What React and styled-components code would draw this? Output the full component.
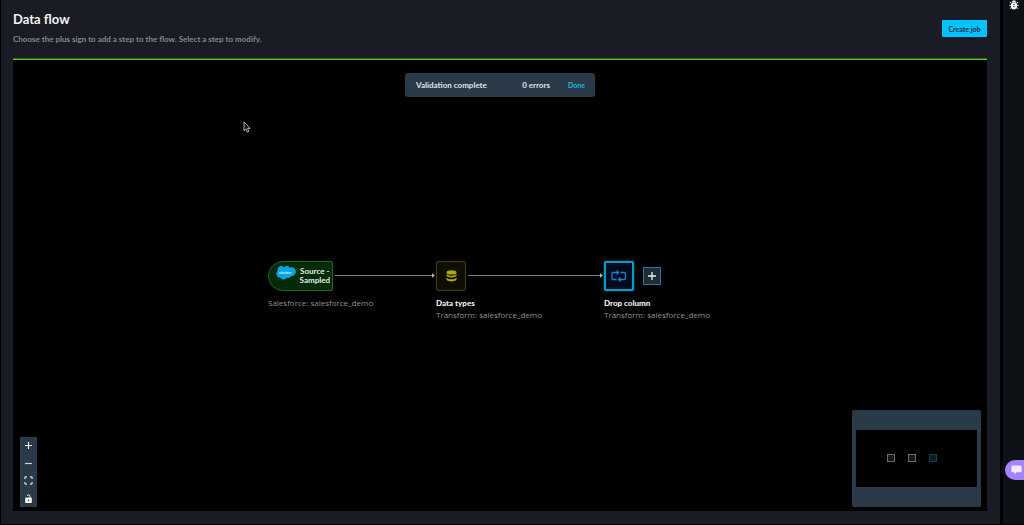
import styled, { createGlobalStyle } from "styled-components";

const GlobalStyle = createGlobalStyle`
  * {
    box-sizing: border-box;
  }

  body {
    margin: 0;
    background-color: #000;
    font-family: Lato, "Noto Sans", sans-serif;
    overflow: hidden;
  }

  button {
    font-family: inherit;
    padding: 0;
    cursor: pointer;
  }
`;

const Page = styled.div`
  display: flex;
  gap: 3px;
  height: 100vh;
  padding: 0 0 1px 1px;
`;

const Main = styled.main`
  flex: 1;
  min-width: 0;
  display: flex;
  flex-direction: column;
  padding: 0 13px 13px 12px;
  background-color: #1a1c25;
`;

const Header = styled.header`
  display: flex;
  justify-content: space-between;
  align-items: flex-start;
  height: 59px;
  padding-top: 11px;
  border-bottom: 1px solid #2f6414;
`;

const Title = styled.h1`
  margin: 0;
  font-size: 13px;
  line-height: 17px;
  font-weight: 700;
  color: #f4f4f5;
`;

const Subtitle = styled.p`
  margin: 5px 0 0;
  font-size: 8px;
  line-height: 12px;
  font-weight: 700;
  color: #85868a;
`;

const CreateButton = styled.button`
  margin-top: 9px;
  height: 17px;
  width: 45px;
  border: none;
  border-radius: 1px;
  background-color: #00c3ff;
  color: #10303f;
  font-size: 7px;
  font-weight: 700;
  white-space: nowrap;
`;

const Canvas = styled.section`
  position: relative;
  flex: 1;
  border-top: 1px solid #67bd2c;
  background-color: #000;
  overflow: hidden;
`;

const Toast = styled.div`
  position: absolute;
  top: 13px;
  left: 50%;
  transform: translateX(-50%);
  display: flex;
  align-items: center;
  width: 190px;
  height: 24px;
  padding: 0 10px 0 11px;
  border-radius: 3px;
  background-color: #2b3a49;
  color: #dfe3e6;
  font-size: 8px;
  font-weight: 700;
`;

const ErrorCount = styled.span`
  margin-left: auto;
`;

const DoneButton = styled.button`
  margin-left: 18px;
  border: none;
  background: none;
  color: #10b3c9;
  font-size: 7px;
  font-weight: 900;
`;

const Node = styled.div`
  position: absolute;
  left: ${(props) => props.$x}px;
  top: ${(props) => props.$y}px;
`;

const NodeRow = styled.div`
  display: flex;
  align-items: center;
  gap: 9px;
  margin-bottom: 6px;
`;

const SourceBox = styled.button`
  display: flex;
  justify-content: flex-end;
  align-items: center;
  gap: 4px;
  width: 65px;
  height: 30px;
  padding-right: 2px;
  border: 1px solid #1c6a22;
  border-radius: 15px 2px 2px 15px;
  background-color: #032b05;
  color: #e4eae4;
  font-size: 8px;
  line-height: 9px;
  font-weight: 700;
`;

const CloudIcon = styled.svg`
  margin-bottom: 7px;
`;

const StepBox = styled.button`
  display: flex;
  align-items: center;
  justify-content: center;
  width: 30px;
  height: 30px;
  border: ${(props) => props.$border};
  border-radius: 2px;
  background-color: ${(props) => props.$background};
  box-shadow: ${(props) => props.$glow || "none"};
`;

const AddButton = styled.button`
  display: flex;
  align-items: center;
  justify-content: center;
  width: 18px;
  height: 18px;
  border: 1px solid #2b7595;
  background-color: #1d2c38;
`;

const NodeName = styled.div`
  font-size: 8px;
  line-height: 12px;
  font-weight: 900;
  color: #f2f2f2;
  white-space: nowrap;
`;

const NodeDetail = styled.div`
  font-family: "Open Sans", "Noto Sans", sans-serif;
  font-size: 8px;
  line-height: 12px;
  font-weight: 400;
  color: #919191;
  white-space: nowrap;
`;

const Edge = styled.svg`
  position: absolute;
  left: ${(props) => props.$x}px;
  top: 213px;
`;

const Pointer = styled.svg`
  position: absolute;
  left: 230px;
  top: 61px;
`;

const Controls = styled.div`
  position: absolute;
  left: 7px;
  bottom: 4px;
  display: flex;
  flex-direction: column;
  justify-content: space-between;
  height: 70px;
  background-color: #2b3a49;
`;

const ControlButton = styled.button`
  display: flex;
  align-items: center;
  justify-content: center;
  width: 17px;
  height: 17px;
  border: none;
  background: none;
`;

const MiniMap = styled.div`
  position: absolute;
  right: 6px;
  bottom: 4px;
  width: 129px;
  height: 97px;
  padding: 20px 4px;
  border-radius: 2px;
  background-color: #2b3a49;
`;

const MiniView = styled.div`
  display: flex;
  justify-content: flex-start;
  gap: 13px;
  height: 57px;
  padding: 24px 0 0 31px;
  background-color: #000;
`;

const MiniNode = styled.div`
  width: 8px;
  height: 8px;
  border: 1px solid ${(props) => props.$color};
  background-color: #171b1f;
`;

const Rail = styled.aside`
  display: flex;
  flex-direction: column;
  justify-content: space-between;
  width: 21px;
  padding-bottom: 44px;
  background-color: #0c1116;
`;

const RailButton = styled.button`
  height: 14px;
  border: none;
  background: none;
  display: flex;
  justify-content: center;
`;

const ChatButton = styled.button`
  display: flex;
  align-items: center;
  justify-content: center;
  align-self: flex-end;
  width: 19px;
  height: 20px;
  padding-left: 3px;
  border: none;
  border-radius: 10px 0 0 10px;
  background-color: #a583fb;
`;

const miniNodes = ["#6a6a6a", "#6a6a6a", "#064356"];

function EdgeLine({ x, length }) {
  return (
    <Edge $x={x} width={length} height="5" viewBox={`0 0 ${length} 5`}>
      <path d={`M0 2.5H${length - 2}`} stroke="#7d7d7d" strokeWidth="1" />
      <path d={`M${length - 3} 0.3L${length} 2.5L${length - 3} 4.7Z`} fill="#b5b5b5" />
    </Edge>
  );
}

function Salesforce() {
  return (
    <CloudIcon width="20" height="15" viewBox="0 0 20 14">
      <path
        d="M8.200 2C9 1 10 .5 11.100.6c1.200 0 2.200.7 2.800 1.600.5-.3 1.100-.4 1.700-.4 2.400 0 4.300 1.900 4.300 4.300s-1.900 4.700-4.300 4.700c-.3 0-.6 0-.9-.1-.5 1-1.500 1.800-2.700 1.800-.5 0-.9-.1-1.300-.3-.5 1.200-1.700 1.700-3.200 1.700-1.500 0-2.800-.6-3.300-1.900C1.900 12 .3 10.400.3 8.300c0-1.300.7-2.400 1.700-3-.2-.5-.3-.9-.3-1.400C1.700 2 3.200.5 5 .5c1.300 0 2.500.6 3.200 1.500z"
        fill="#08a3e3"
      />
      <text x="3" y="8" fontSize="3" fontStyle="italic" fontWeight="700" fill="#d9f1fb">
        salesforce
      </text>
    </CloudIcon>
  );
}

export default function App() {
  return (
    <>
      <GlobalStyle />
      <Page>
        <Main>
          <Header>
            <div>
              <Title>Data flow</Title>
              <Subtitle>
                Choose the plus sign to add a step to the flow. Select a step to modify.
              </Subtitle>
            </div>
            <CreateButton>Create job</CreateButton>
          </Header>

          <Canvas>
            <Toast role="status">
              <span>Validation complete</span>
              <ErrorCount>0 errors</ErrorCount>
              <DoneButton>Done</DoneButton>
            </Toast>

            <EdgeLine x={322} length={100} />
            <EdgeLine x={455} length={135} />

            <Node $x={255} $y={201}>
              <NodeRow>
                <SourceBox>
                  <Salesforce />
                  <span>
                    Source -<br />
                    Sampled
                  </span>
                </SourceBox>
              </NodeRow>
              <NodeDetail>Salesforce: salesforce_demo</NodeDetail>
            </Node>

            <Node $x={423} $y={201}>
              <NodeRow>
                <StepBox
                  aria-label="Data types"
                  $border="1px solid #42430f"
                  $background="#0e0e02"
                >
                  <svg width="11" height="12" viewBox="0 0 11 12" fill="#abab0c">
                    <ellipse cx="5.5" cy="2.4" rx="5" ry="2.2" />
                    <path d="M.5 4c1 1.400 3 1.700 5 1.700s4-.3 5-1.700v1.300c0 1.300-2.300 2.200-5 2.200S.5 6.600.5 5.300z" />
                    <path d="M.5 7.600c1 1.400 3 1.700 5 1.700s4-.3 5-1.700v1.700c0 1.300-2.300 2.200-5 2.200s-5-.9-5-2.200z" />
                  </svg>
                </StepBox>
              </NodeRow>
              <NodeName>Data types</NodeName>
              <NodeDetail>Transform: salesforce_demo</NodeDetail>
            </Node>

            <Node $x={591} $y={201}>
              <NodeRow>
                <StepBox
                  aria-label="Drop column"
                  $border="2px solid #009fcb"
                  $background="#020b1b"
                  $glow="0 0 2px #0086b0"
                >
                  <svg width="16" height="12" viewBox="0 0 16 12" fill="none" stroke="#1683d6" strokeWidth="1.3">
                    <path d="M7 2.500H2.200Q1 2.500 1 3.700v4.600Q1 9.500 2.200 9.500H5.500" />
                    <path d="M9.500 2.500h3.800q1.200 0 1.200 1.200v4.600q0 1.200-1.200 1.200H8" />
                    <path d="M5.500.5L7.500 2.500L5.500 4.500M9.500 7.500L7.500 9.500L9.500 11.500" />
                  </svg>
                </StepBox>
                <AddButton aria-label="Add step">
                  <svg width="10" height="10" viewBox="0 0 10 10">
                    <path d="M5 1v8M1 5h8" stroke="#f0f0f0" strokeWidth="1.3" />
                  </svg>
                </AddButton>
              </NodeRow>
              <NodeName>Drop column</NodeName>
              <NodeDetail>Transform: salesforce_demo</NodeDetail>
            </Node>

            <Pointer width="8" height="12" viewBox="0 0 8 12">
              <path
                d="M1 .8v9l2-1.900 1.400 3.300 1.500-.7-1.400-3.100h2.700z"
                fill="#151515"
                stroke="#bdbdbd"
                strokeWidth="0.9"
              />
            </Pointer>

            <Controls>
              <ControlButton aria-label="Zoom in">
                <svg width="7" height="7" viewBox="0 0 7 7">
                  <path d="M3.500 0v7M0 3.500h7" stroke="#eee" strokeWidth="1.2" />
                </svg>
              </ControlButton>
              <ControlButton aria-label="Zoom out">
                <svg width="7" height="7" viewBox="0 0 7 7">
                  <path d="M0 3.500h7" stroke="#c9ced2" strokeWidth="1.2" />
                </svg>
              </ControlButton>
              <ControlButton aria-label="Fit view">
                <svg width="9" height="9" viewBox="0 0 10 10" fill="none" stroke="#e6e6e6" strokeWidth="1.3">
                  <path d="M3.300 1H2Q1 1 1 2v1.300M6.700 1H8q1 0 1 1v1.300M1 6.700V8q0 1 1 1h1.300M9 6.700V8q0 1-1 1H6.700" />
                </svg>
              </ControlButton>
              <ControlButton aria-label="Lock">
                <svg width="7" height="9" viewBox="0 0 7 9">
                  <path d="M4.900 3.800V2.200Q4.900.8 3.500.8 2.300.8 2.200 1.900" fill="none" stroke="#eee" strokeWidth="1" />
                  <path d="M.9 3.600h5.200q.7 0 .7.700v3.900q0 .7-.7.700H.9q-.7 0-.7-.7V4.300q0-.7.7-.7z" fill="#f5f5f5" />
                  <circle cx="3.5" cy="6.2" r="0.8" fill="#2b3a49" />
                </svg>
              </ControlButton>
            </Controls>

            <MiniMap>
              <MiniView>
                {miniNodes.map((color, i) => (
                  <MiniNode key={i} $color={color} />
                ))}
              </MiniView>
            </MiniMap>
          </Canvas>
        </Main>

        <Rail>
          <RailButton aria-label="Debugger">
            <svg width="10" height="10" viewBox="0 0 10 10">
              <path d="M3 2.200a2 2 0 0 1 4 0z" fill="#fff" />
              <path
                d="M.8 2.200l1.800 1M9.200 2.200l-1.800 1M.3 5.300h9.400M.8 8.600l1.800-1.200M9.200 8.600L7.400 7.400"
                stroke="#e8e8e8"
                strokeWidth="1"
              />
              <rect x="2.1" y="2.3" width="5.8" height="7.2" rx="2.4" fill="#fff" />
              <path d="M4 4.600h2M4 6.700h2" stroke="#4a4e52" strokeWidth="0.9" />
            </svg>
          </RailButton>
          <ChatButton aria-label="Open chat">
            <svg width="11" height="10" viewBox="0 0 11 10">
              <path d="M1 .5h9q.6 0 .6.600v5.600q0 .6-.6.600H5.500L3.500 9.600V7.300H1q-.6 0-.6-.6V1.100Q.4.500 1 .5z" fill="#f0eafe" />
            </svg>
          </ChatButton>
        </Rail>
      </Page>
    </>
  );
}
